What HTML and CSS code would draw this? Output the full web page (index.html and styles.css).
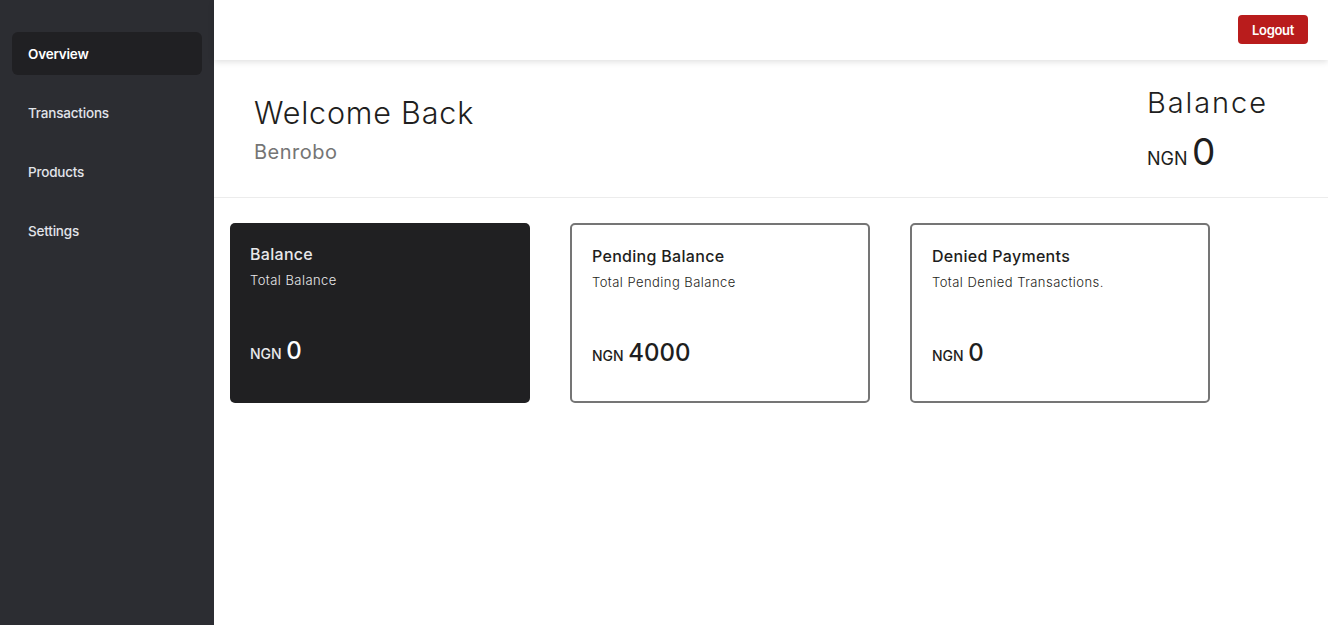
FILE: index.html
```html
<!DOCTYPE html>
<html>
<head>
<meta charset="utf-8">
<link rel="stylesheet" href="styles.css">
</head>
<body>
<div class="app">
  <aside class="sidebar">
    <nav class="nav">
      <a class="nav-item active">Overview</a>
      <a class="nav-item">Transactions</a>
      <a class="nav-item">Products</a>
      <a class="nav-item">Settings</a>
    </nav>
  </aside>
  <main class="main">
    <header class="topbar">
      <button class="logout">Logout</button>
    </header>
    <section class="welcome">
      <div class="greet">
        <h1 class="greet-title">Welcome Back</h1>
        <div class="greet-name">Benrobo</div>
      </div>
      <div class="bal">
        <div class="bal-title">Balance</div>
        <div class="bal-amount"><span class="bal-cur">NGN</span> <span class="bal-num">0</span></div>
      </div>
    </section>
    <section class="cards">
      <div class="card dark">
        <div class="card-title">Balance</div>
        <div class="card-sub">Total Balance</div>
        <div class="card-amount"><span class="cur">NGN</span> <span class="num">0</span></div>
      </div>
      <div class="card">
        <div class="card-title">Pending Balance</div>
        <div class="card-sub">Total Pending Balance</div>
        <div class="card-amount"><span class="cur">NGN</span> <span class="num">4000</span></div>
      </div>
      <div class="card">
        <div class="card-title">Denied Payments</div>
        <div class="card-sub">Total Denied Transactions.</div>
        <div class="card-amount"><span class="cur">NGN</span> <span class="num">0</span></div>
      </div>
    </section>
  </main>
</div>
</body>
</html>
```
FILE: styles.css
```css
* { box-sizing: border-box; }
html, body { margin: 0; padding: 0; height: 100%; }
body {
  font-family: "Inter", "Open Sans", sans-serif;
  background: #fff;
  color: #1c1c1e;
}
.app { display: flex; height: 625px; }
.sidebar {
  width: 214px;
  flex: none;
  background: #2c2d32;
  padding: 32px 12px;
}
.nav { display: flex; flex-direction: column; gap: 16px; }
.nav-item {
  display: flex;
  align-items: center;
  height: 43px;
  padding: 0 16px;
  border-radius: 6px;
  color: #e2e4ea;
  font-size: 13.5px;
  font-weight: 500;
  letter-spacing: -0.2px;
}
.nav-item.active { background: #202023; color: #fff; font-weight: 600; }

.main { flex: 1; display: flex; flex-direction: column; min-width: 0; }
.topbar {
  height: 60px;
  flex: none;
  display: flex;
  justify-content: flex-end;
  align-items: flex-start;
  padding: 15px 20px 0 0;
  box-shadow: 0 2px 6px rgba(0,0,0,0.12);
  position: relative;
  z-index: 1;
}
.logout {
  width: 70px;
  height: 29px;
  border: none;
  border-radius: 4px;
  background: #b91c1c;
  color: #fff;
  font-family: inherit;
  font-size: 13px;
  font-weight: 600;
  letter-spacing: -0.3px;
}
.welcome {
  height: 138px;
  flex: none;
  display: flex;
  justify-content: space-between;
  padding: 24px 60px 0 40px;
  border-bottom: 1px solid #ececec;
}
.greet { padding-top: 10px; }
.greet-title {
  margin: 0;
  font-size: 30.5px;
  font-weight: 300;
  line-height: 38px;
  color: #1e1e20;
  letter-spacing: 0.8px;
}
.greet-name {
  margin-top: 7px;
  font-size: 20px;
  font-weight: 400;
  color: #757575;
  line-height: 26px;
  letter-spacing: 0.5px;
}
.bal { width: 121px; }
.bal-title {
  font-size: 29px;
  font-weight: 300;
  line-height: 38px;
  color: #1e1e20;
  letter-spacing: 1.9px;
  white-space: nowrap;
}
.bal-amount { margin-top: 10px; line-height: 40px; color: #1e1e20; white-space: nowrap; }
.bal-cur { font-size: 18px; font-weight: 400; }
.bal-num { font-size: 37px; font-weight: 400; letter-spacing: 0.5px; }

.cards {
  display: flex;
  gap: 40px;
  padding: 25px 16px;
}
.card {
  width: 300px;
  height: 180px;
  border: 2px solid #757575;
  border-radius: 5px;
  padding: 20px 20px 0 20px;
  display: flex;
  flex-direction: column;
  color: #1e1e20;
}
.card.dark {
  background: #202022;
  border: none;
  padding: 20px 20px 0 20px;
  color: #e8e8ea;
}
.card-title { font-size: 16px; font-weight: 500; line-height: 22px; letter-spacing: 0.3px; }
.card-sub { font-size: 13px; font-weight: 300; line-height: 20px; margin-top: 5px; letter-spacing: 0.45px; }
.card-amount { margin-top: 45px; line-height: 32px; }
.card .cur { font-size: 14px; font-weight: 500; }
.card .num { font-size: 24px; font-weight: 500; }
.card.dark .num { color: #fff; }
```
